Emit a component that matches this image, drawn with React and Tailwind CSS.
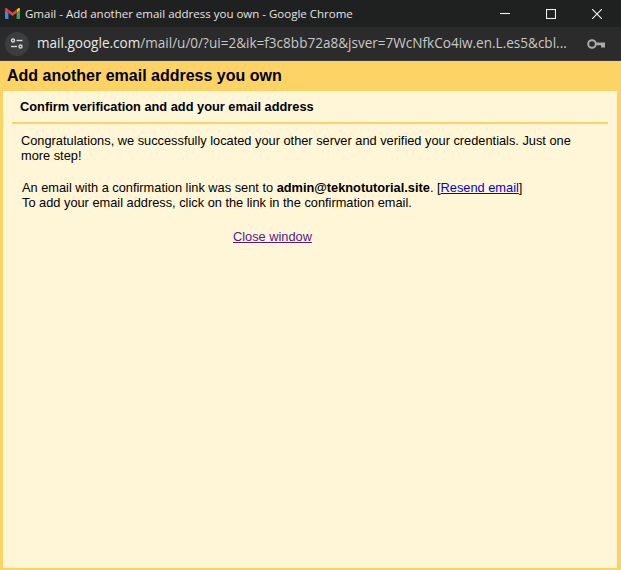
import React from "react";

function GmailLogo() {
    return (
        <svg width="15" height="11" viewBox="0 0 15 11" className="shrink-0">
            <path d="M0 9.8V2.2l3.4 2.6V11H1.1A1.1 1.1 0 0 1 0 9.8z" fill="#4285F4" />
            <path d="M11.6 11V4.8L15 2.2v7.6a1.1 1.1 0 0 1-1.1 1.2z" fill="#34A853" />
            <path d="M11.6 1.6L13.2.3c.8-.6 1.8 0 1.8 1v.9l-3.4 2.6z" fill="#FBBC04" />
            <path d="M3.4 4.8V1.6l4.1 3.1 4.1-3.1v3.2L7.5 7.9z" fill="#EA4335" />
            <path d="M0 1.3c0-1 1-1.6 1.8-1l1.6 1.3v3.2L0 2.2z" fill="#EA4335" />
        </svg>
    );
}

function TunePill() {
    return (
        <div className="flex h-6 w-6 shrink-0 items-center justify-center rounded-full bg-[#3c3d3f]">
            <svg width="14" height="14" viewBox="0 0 14 14" fill="none" stroke="#d6d7d8" strokeWidth="1.4">
                <circle cx="3" cy="3.5" r="1.5" />
                <path d="M6.5 3.5h6" />
                <circle cx="10.5" cy="9.5" r="1.5" />
                <path d="M1 9.5h6" />
            </svg>
        </div>
    );
}

function KeyIcon() {
    return (
        <svg width="18" height="10" viewBox="0 0 18 10" fill="none" className="shrink-0">
            <circle cx="5" cy="5" r="3.8" stroke="#a9aaab" strokeWidth="2" />
            <path d="M8.5 3.4H18v5h-4V6.2H8.5z" fill="#a9aaab" />
        </svg>
    );
}

export default function App() {
    return (
        <div className="flex h-[570px] w-[621px] flex-col overflow-hidden bg-[#fcd364] font-['Liberation_Sans',Arial,sans-serif] text-black">
            <div className="flex h-[27px] shrink-0 items-center bg-[#1f2020] pl-[5px] font-['Open_Sans',sans-serif] text-[11.5px] text-[#e3e3e3]">
                <GmailLogo />
                <span className="ml-[5px] flex-1 truncate">Gmail - Add another email address you own - Google Chrome</span>
                <svg width="10" height="10" viewBox="0 0 10 10" fill="none" stroke="#f2f2f2" strokeWidth="1.1" className="mr-[36px] -translate-y-[1px]">
                    <path d="M0 5.5h10" />
                </svg>
                <svg width="10" height="10" viewBox="0 0 10 10" fill="none" stroke="#f2f2f2" strokeWidth="1.1" className="mr-[36px]">
                    <rect x="0.5" y="0.5" width="9" height="9" />
                </svg>
                <svg width="10" height="10" viewBox="0 0 10 10" fill="none" stroke="#f2f2f2" strokeWidth="1.1" className="mr-[19px]">
                    <path d="M0 0l10 10M10 0L0 10" />
                </svg>
            </div>

            <div className="flex h-[34px] shrink-0 items-center border-b border-[#3a3a3a] bg-[#2b2b2b] pl-[5px] pr-[16px] font-['Open_Sans',sans-serif] text-[13.55px] text-[#c7c8c9]">
                <TunePill />
                <span className="ml-[8px] flex-1 truncate">
                    <span className="text-[#e8e8e8]">mail.google.com</span>/mail/u/0/?ui=2&amp;ik=f3c8bb72a8&amp;jsver=7WcNfkCo4iw.en.L.es5&amp;cbl...
                </span>
                <KeyIcon />
            </div>

            <div className="flex h-[30px] shrink-0 items-center pl-[7px] text-[16px] font-bold">
                Add another email address you own
            </div>

            <div className="mb-[2px] ml-[3px] mr-[4px] flex-1 bg-[#fff5d7] pl-[9px] pr-[9px] text-[12.8px] leading-[15px]">
                <div className="flex h-[33px] items-center border-b-2 border-[#fcd364] pl-[8px] font-bold">
                    Confirm verification and add your email address
                </div>
                <p className="mt-[9px] pl-[9px] pr-[30px]">
                    Congratulations, we successfully located your other server and verified your credentials. Just one more step!
                </p>
                <div className="mt-[17px] pl-[10px]">
                    <p>
                        An email with a confirmation link was sent to <b>admin@teknotutorial.site</b>. [
                        <a href="#resend" className="text-[#0000ee] underline">Resend email</a>]
                    </p>
                    <p>To add your email address, click on the link in the confirmation email.</p>
                </div>
                <div className="mt-[19px] pl-[221px]">
                    <a href="#close" className="text-[#551a8b] underline">Close window</a>
                </div>
            </div>
        </div>
    );
}
